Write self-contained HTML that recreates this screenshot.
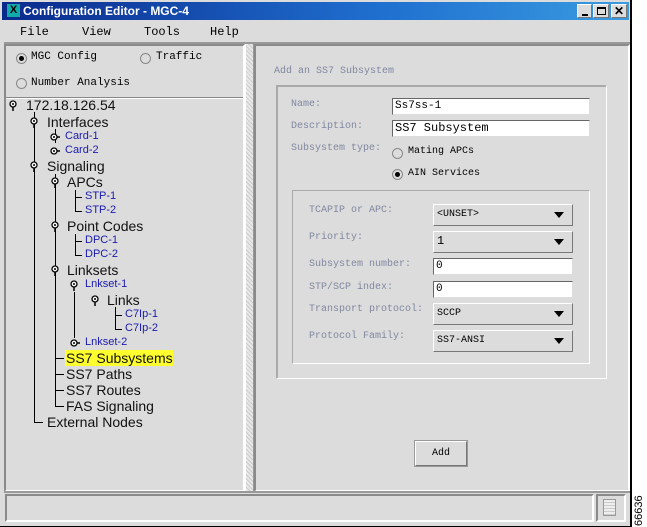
<!DOCTYPE html>
<html><head><meta charset="utf-8"><style>
*{margin:0;padding:0;box-sizing:border-box}
body{width:647px;height:527px;background:#fff;position:relative;overflow:hidden;font-family:"Liberation Sans",sans-serif}
.a{position:absolute;white-space:nowrap}
.win{left:0;top:0;width:632px;height:527px;background:#dcdcdc;border-right:2px solid #000;border-bottom:1px solid #000}
.title{left:2px;top:2px;width:627px;height:18px;background:linear-gradient(90deg,#0a2a8c,#1f6fcf 60%,#3a9be0);color:#fff;font-weight:bold;font-size:12px;line-height:18px}
.sunk{border:2px solid;border-color:#8a8a8a #fff #fff #8a8a8a}
.rais{border:1px solid;border-color:#fff #777 #777 #fff}
.inp{background:#fff;border:1px solid;border-color:#666 #ddd #ddd #666;font-family:"Liberation Mono",monospace;font-size:11px;line-height:15px;padding-left:2px}
.cmb{background:#dcdcdc;border:1px solid;border-color:#fff #777 #777 #fff;font-family:"Liberation Mono",monospace;font-size:10px;padding-left:3px;line-height:19px}
.cmb:after{content:"";position:absolute;right:8px;top:7px;border-left:5px solid transparent;border-right:5px solid transparent;border-top:6px solid #000}
.lbl{font-family:"Liberation Mono",monospace;font-size:10px;color:#8088a0}
.t{font-size:14px;color:#111}
.b{font-size:11px;color:#1a1ab0}
.rad{width:11px;height:11px;border-radius:50%;border:1px solid #888;background:#dcdcdc}
.rad.on:after{content:"";position:absolute;left:2px;top:2px;width:5px;height:5px;border-radius:50%;background:#000}
.v{position:absolute;width:1px;background:#000}
.h{position:absolute;height:1px;background:#000}
svg{position:absolute}
</style></head><body>
<div class="a win"></div>
<div class="a title"><span style="display:inline-block;width:13px;height:13px;background:#1aa;color:#000;font-size:11px;line-height:13px;text-align:center;margin:2px 3px 0 5px;vertical-align:top">X</span>Configuration Editor - MGC-4</div>
<div class="a rais" style="left:577px;top:4px;width:15px;height:14px;background:#dcdcdc"><div class="a" style="left:4px;top:9px;width:6px;height:2px;background:#000"></div></div>
<div class="a rais" style="left:593px;top:4px;width:16px;height:14px;background:#dcdcdc"><div class="a" style="left:3px;top:2px;width:9px;height:8px;border:1px solid #000;border-top-width:2px"></div></div>
<div class="a rais" style="left:611px;top:4px;width:16px;height:14px;background:#dcdcdc;font-size:12px;font-weight:bold;text-align:center;line-height:12px">✕</div>
<div class="a" style="left:20px;top:25px;font-size:12px;font-family:'Liberation Mono',monospace">File</div>
<div class="a" style="left:82px;top:25px;font-size:12px;font-family:'Liberation Mono',monospace">View</div>
<div class="a" style="left:144px;top:25px;font-size:12px;font-family:'Liberation Mono',monospace">Tools</div>
<div class="a" style="left:210px;top:25px;font-size:12px;font-family:'Liberation Mono',monospace">Help</div>
<div class="a" style="left:4px;top:42px;width:626px;height:2px;background:#999"></div>
<div class="a sunk" style="left:4px;top:44px;width:241px;height:448px"></div>
<div class="a rad on" style="left:16px;top:53px"></div><div class="a" style="left:31px;top:51px;font-size:11px;font-family:'Liberation Mono',monospace">MGC Config</div>
<div class="a rad" style="left:140px;top:53px"></div><div class="a" style="left:156px;top:51px;font-size:11px;font-family:'Liberation Mono',monospace">Traffic</div>
<div class="a rad" style="left:16px;top:78px"></div><div class="a" style="left:31px;top:77px;font-size:11px;font-family:'Liberation Mono',monospace">Number Analysis</div>
<div class="a" style="left:6px;top:97px;width:237px;height:1px;background:#888"></div>
<div class="a" style="left:6px;top:98px;width:237px;height:1px;background:#fff"></div>
<div class="a" style="left:245px;top:44px;width:9px;height:448px;background:repeating-linear-gradient(45deg,#ccc 0 1px,#e8e8e8 1px 3px);border-left:1px solid #fff;border-right:1px solid #999"></div>
<div class="v" style="left:34px;top:112px;height:310px"></div><div class="h" style="left:34px;top:422px;width:9px"></div>
<div class="v" style="left:55px;top:174px;height:232px"></div>
<div class="h" style="left:55px;top:358px;width:9px"></div><div class="h" style="left:55px;top:374px;width:9px"></div><div class="h" style="left:55px;top:390px;width:9px"></div><div class="h" style="left:55px;top:406px;width:9px"></div>
<div class="v" style="left:55px;top:129px;height:14px"></div>
<div class="v" style="left:75px;top:190px;height:21px"></div><div class="h" style="left:75px;top:197px;width:7px"></div><div class="h" style="left:75px;top:211px;width:7px"></div>
<div class="v" style="left:75px;top:234px;height:21px"></div><div class="h" style="left:75px;top:241px;width:7px"></div><div class="h" style="left:75px;top:255px;width:7px"></div>
<div class="v" style="left:74px;top:292px;height:46px"></div>
<div class="v" style="left:115px;top:307px;height:22px"></div><div class="h" style="left:115px;top:315px;width:7px"></div><div class="h" style="left:115px;top:329px;width:7px"></div>
<!-- expanded icons -->
<svg width="0" height="0"><defs>
<g id="ex"><circle cx="4" cy="4" r="3" fill="#fff" stroke="#000" stroke-width="1.3"/><circle cx="4" cy="4" r="1" fill="#000"/><line x1="4" y1="7" x2="4" y2="11" stroke="#000" stroke-width="1.5"/></g>
<g id="co"><circle cx="4" cy="4" r="3" fill="#fff" stroke="#000" stroke-width="1.3"/><circle cx="4" cy="4" r="1" fill="#000"/><line x1="7" y1="4" x2="10" y2="4" stroke="#000" stroke-width="1.5"/></g>
</defs></svg>
<svg style="left:9px;top:100px" width="11" height="12"><use href="#ex"/></svg>
<svg style="left:30px;top:117px" width="11" height="12"><use href="#ex"/></svg>
<svg style="left:50px;top:133px" width="11" height="12"><use href="#co"/></svg>
<svg style="left:50px;top:147px" width="11" height="12"><use href="#co"/></svg>
<svg style="left:30px;top:161px" width="11" height="12"><use href="#ex"/></svg>
<svg style="left:51px;top:177px" width="11" height="12"><use href="#ex"/></svg>
<svg style="left:51px;top:221px" width="11" height="12"><use href="#ex"/></svg>
<svg style="left:51px;top:265px" width="11" height="12"><use href="#ex"/></svg>
<svg style="left:70px;top:280px" width="11" height="12"><use href="#ex"/></svg>
<svg style="left:91px;top:295px" width="11" height="12"><use href="#ex"/></svg>
<svg style="left:70px;top:339px" width="11" height="12"><use href="#co"/></svg>
<div class="a t" style="left:26px;top:97px">172.18.126.54</div>
<div class="a t" style="left:47px;top:114px">Interfaces</div>
<div class="a b" style="left:65px;top:130px">Card-1</div>
<div class="a b" style="left:65px;top:144px">Card-2</div>
<div class="a t" style="left:47px;top:158px">Signaling</div>
<div class="a t" style="left:67px;top:174px">APCs</div>
<div class="a b" style="left:85px;top:190px">STP-1</div>
<div class="a b" style="left:85px;top:204px">STP-2</div>
<div class="a t" style="left:67px;top:218px">Point Codes</div>
<div class="a b" style="left:85px;top:234px">DPC-1</div>
<div class="a b" style="left:85px;top:248px">DPC-2</div>
<div class="a t" style="left:67px;top:262px">Linksets</div>
<div class="a b" style="left:85px;top:278px">Lnkset-1</div>
<div class="a t" style="left:107px;top:292px">Links</div>
<div class="a b" style="left:125px;top:308px">C7Ip-1</div>
<div class="a b" style="left:125px;top:322px">C7Ip-2</div>
<div class="a b" style="left:85px;top:336px">Lnkset-2</div>
<div class="a" style="left:65px;top:350px;width:108px;height:16px;background:#ffff30"></div>
<div class="a t" style="left:66px;top:350px">SS7 Subsystems</div>
<div class="a t" style="left:66px;top:366px">SS7 Paths</div>
<div class="a t" style="left:66px;top:382px">SS7 Routes</div>
<div class="a t" style="left:66px;top:398px">FAS Signaling</div>
<div class="a t" style="left:47px;top:414px">External Nodes</div>
<div class="a sunk" style="left:254px;top:44px;width:376px;height:448px;border-color:#8a8a8a #fff #fff #8a8a8a"></div>
<div class="a lbl" style="left:274px;top:66px">Add an SS7 Subsystem</div>
<div class="a" style="left:276px;top:85px;width:331px;height:294px;border:1px solid;border-color:#aaa #fff #fff #aaa;box-shadow:1px 1px 0 #aaa inset"></div>
<div class="a lbl" style="left:291px;top:99px">Name:</div>
<div class="a inp" style="left:392px;top:98px;width:198px;height:17px">Ss7ss-1</div>
<div class="a lbl" style="left:291px;top:121px">Description:</div>
<div class="a inp" style="left:392px;top:120px;width:198px;height:17px;font-size:12px">SS7 Subsystem</div>
<div class="a lbl" style="left:291px;top:143px">Subsystem type:</div>
<div class="a rad" style="left:392px;top:148px"></div><div class="a" style="left:408px;top:146px;font-size:10px;font-family:'Liberation Mono',monospace">Mating APCs</div>
<div class="a rad on" style="left:392px;top:169px"></div><div class="a" style="left:408px;top:168px;font-size:10px;font-family:'Liberation Mono',monospace">AIN Services</div>
<div class="a" style="left:292px;top:190px;width:298px;height:174px;border:1px solid;border-color:#aaa #fff #fff #aaa"></div>
<div class="a lbl" style="left:309px;top:205px">TCAPIP or APC:</div>
<div class="a cmb" style="left:433px;top:204px;width:140px;height:22px">&lt;UNSET&gt;</div>
<div class="a lbl" style="left:309px;top:232px">Priority:</div>
<div class="a cmb" style="left:433px;top:231px;width:140px;height:22px;font-size:12px">1</div>
<div class="a lbl" style="left:309px;top:259px">Subsystem number:</div>
<div class="a inp" style="left:433px;top:258px;width:140px;height:17px">0</div>
<div class="a lbl" style="left:309px;top:282px">STP/SCP index:</div>
<div class="a inp" style="left:433px;top:281px;width:140px;height:17px">0</div>
<div class="a lbl" style="left:309px;top:304px">Transport protocol:</div>
<div class="a cmb" style="left:433px;top:303px;width:140px;height:22px">SCCP</div>
<div class="a lbl" style="left:309px;top:331px">Protocol Family:</div>
<div class="a cmb" style="left:433px;top:330px;width:140px;height:22px">SS7-ANSI</div>
<div class="a" style="left:415px;top:441px;width:52px;height:25px;border:1px solid;border-color:#fff #777 #777 #fff;outline:1px solid #999;font-size:10px;font-family:'Liberation Mono',monospace;text-align:center;line-height:23px">Add</div>
<div class="a" style="left:4px;top:491px;width:626px;height:2px;background:#999"></div>
<div class="a sunk" style="left:5px;top:494px;width:589px;height:28px"></div>
<div class="a sunk" style="left:596px;top:494px;width:30px;height:28px"></div>
<div class="a" style="left:603px;top:499px;width:13px;height:17px;border:1px solid #999;background:repeating-linear-gradient(0deg,#ccc 0 1px,#eee 1px 3px)"></div>
<div class="a" style="font-size:11px;transform:rotate(-90deg);transform-origin:left top;top:526px;left:633px">66636</div>
</body></html>
